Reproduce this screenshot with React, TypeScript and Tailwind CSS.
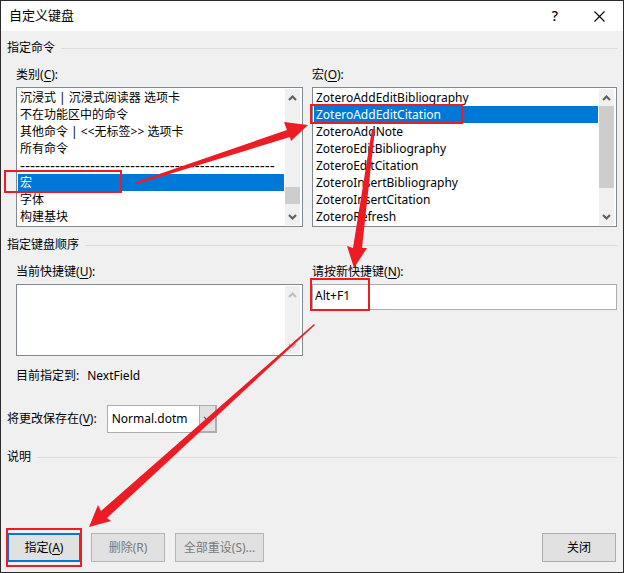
import type { ReactNode } from "react";

const ui = "font-['Noto_Sans','Noto_Sans_CJK_SC',sans-serif]";

function Chevron({ up, faint, thin }: { up?: boolean; faint?: boolean; thin?: boolean }) {
  return (
    <svg viewBox="0 0 9 8" className={`h-2 w-[9px] ${faint ? "text-[#bfbfbf]" : "text-[#606060]"}`} aria-hidden="true">
      <path d={up ? "M1 6 4.5 2.5 8 6" : "M1 2 4.5 5.5 8 2"} fill="none" stroke="currentColor" strokeWidth={thin ? 1.2 : 2.2} />
    </svg>
  );
}

function ScrollBar({ thumb, faint }: { thumb?: string; faint?: boolean }) {
  return (
    <div className="flex w-[15px] shrink-0 flex-col bg-[#f0f0f0]">
      <button type="button" aria-label="向上滚动" disabled={faint} className="flex h-[17px] shrink-0 items-center justify-center">
        <Chevron up faint={faint} />
      </button>
      <div className="flex-1">{thumb && <div className={`bg-[#cdcdcd] ${thumb}`} />}</div>
      <button type="button" aria-label="向下滚动" disabled={faint} className="flex h-[17px] shrink-0 items-center justify-center">
        <Chevron faint={faint} />
      </button>
    </div>
  );
}

function ListBox({ id, items, selected, thumb }: { id: string; items: string[]; selected: string; thumb: string }) {
  return (
    <div className="flex border border-[#828790] bg-white p-px pr-0.5">
      <ul role="listbox" aria-labelledby={id} className="min-w-0 flex-1 overflow-hidden pr-px">
        {items.map((item) => (
          <li
            key={item}
            role="option"
            aria-selected={item === selected}
            className={`h-[17px] overflow-hidden pl-0.5 leading-[17px] whitespace-pre ${
              item === selected ? "bg-[#0078d7] text-white" : ""
            } ${item.startsWith("---") ? "font-['Liberation_Sans',sans-serif] text-[15px]" : "text-xs"}`}
          >
            {item}
          </li>
        ))}
      </ul>
      <ScrollBar thumb={thumb} />
    </div>
  );
}

function Heading({ children }: { children: ReactNode }) {
  return (
    <div className="flex items-center gap-1.5">
      <h2 className="leading-4">{children}</h2>
      <div className="h-px flex-1 bg-[#dcdcdc]" />
    </div>
  );
}

function Key({ text, letter, colon }: { text: string; letter: string; colon?: boolean }) {
  return (
    <>
      {text}(<span className="underline underline-offset-2">{letter}</span>){colon && ":"}
    </>
  );
}

const categories = [
  "沉浸式 | 沉浸式阅读器 选项卡",
  "不在功能区中的命令",
  "其他命令 | <<无标签>> 选项卡",
  "所有命令",
  "---------------------------------------------------",
  "宏",
  "字体",
  "构建基块",
];

const macros = [
  "ZoteroAddEditBibliography",
  "ZoteroAddEditCitation",
  "ZoteroAddNote",
  "ZoteroEditBibliography",
  "ZoteroEditCitation",
  "ZoteroInsertBibliography",
  "ZoteroInsertCitation",
  "ZoteroRefresh",
];

function Annotations() {
  return (
    <svg className="pointer-events-none absolute -top-px -left-px h-[573px] w-[624px]" viewBox="0 0 624 573" aria-hidden="true">
      <g fill="none" stroke="#ed1c24" strokeWidth="2">
        <rect x="5" y="171" width="116" height="21" />
        <rect x="311" y="105" width="151" height="18" />
        <rect x="311" y="279" width="58" height="31" />
        <rect x="7" y="529" width="74" height="37" />
      </g>
      <g fill="#ed1c24">
        <path d="M136 182 L287 130 L284 122 L308 125 L291 141 L290 137 L137 184 Z" />
        <path d="M372 129 L375 129 L362 248 L367 248 L354 268 L347 246 L353 248 Z" />
        <path d="M314 324 L315 325 L107 518 L111 521 L89 527 L98 505 L101 511 Z" />
      </g>
    </svg>
  );
}

export default function App() {
  return (
    <div className={`relative flex min-h-screen flex-col border border-[#2b2b2b] bg-[#f0f0f0] text-xs text-black ${ui}`}>
      <header className="flex h-[30px] items-center bg-white pr-4 pl-2">
        <h1 className="flex-1 text-[13px]">自定义键盘</h1>
        <button type="button" aria-label="帮助" className="mr-7 w-4 text-sm font-medium">?</button>
        <button type="button" aria-label="关闭窗口" className="flex h-4 w-4 items-center justify-center">
          <svg viewBox="0 0 11 11" className="h-[11px] w-[11px]" aria-hidden="true">
            <path d="M.5 .5 10.5 10.5M10.5 .5 .5 10.5" stroke="#000" strokeWidth="1.1" />
          </svg>
        </button>
      </header>

      <main className="flex flex-1 flex-col px-1.5 pt-[9px] pb-2.5">
        <Heading>指定命令</Heading>
        <div className="mt-[11px] grid grid-cols-[287fr_305fr] gap-[9px] pl-[9px]">
          <section>
            <h3 id="category" className="mb-1 leading-4"><Key text="类别" letter="C" colon /></h3>
            <ListBox id="category" items={categories} selected="宏" thumb="mt-[81px] h-[17px]" />
          </section>
          <section>
            <h3 id="macro" className="mb-1 leading-4"><Key text="宏" letter="O" colon /></h3>
            <ListBox id="macro" items={macros} selected="ZoteroAddEditCitation" thumb="h-[82px]" />
          </section>
        </div>

        <div className="mt-2.5"><Heading>指定键盘顺序</Heading></div>
        <div className="mt-[11px] grid grid-cols-[287fr_305fr] gap-[9px] pl-[9px]">
          <section>
            <h3 id="current" className="mb-1 leading-4"><Key text="当前快捷键" letter="U" colon /></h3>
            <div className="flex h-[72px] border border-[#828790] bg-white p-px pr-0.5">
              <ul role="listbox" aria-labelledby="current" className="flex-1" />
              <ScrollBar faint />
            </div>
          </section>
          <section>
            <label htmlFor="shortcut" className="mb-1 block leading-4"><Key text="请按新快捷键" letter="N" colon /></label>
            <input id="shortcut" defaultValue="Alt+F1" className="block h-[26px] w-full border border-[#abadb3] bg-white px-0.5 pb-1 outline-none" />
          </section>
        </div>

        <p className="mt-3 flex gap-2 pl-[9px] leading-4">
          <span>目前指定到:</span>
          <span>NextField</span>
        </p>

        <div className="mt-[21px] flex items-center gap-2.5">
          <label htmlFor="save"><Key text="将更改保存在" letter="V" colon /></label>
          <div className="grid h-7 w-[110px] grid-cols-[1fr_18px]">
            <select id="save" className="col-span-2 col-start-1 row-start-1 appearance-none border border-[#adadad] bg-white px-1 outline-none">
              <option>Normal.dotm</option>
            </select>
            <span className="pointer-events-none col-start-2 row-start-1 flex items-center justify-center border border-r-2 border-b-2 border-[#adadad] bg-[#e1e1e1]">
              <Chevron thin />
            </span>
          </div>
        </div>

        <div className="mt-4"><Heading>说明</Heading></div>

        <footer className="mt-auto flex gap-2.5 pr-px">
          <button type="button" className="h-[29px] w-[74px] border-2 border-[#0078d7] bg-[#e1e1e1]"><Key text="指定" letter="A" /></button>
          <button type="button" disabled className="h-[29px] w-[74px] border border-[#b5b5b5] bg-[#e1e1e1] text-[#7a7a7a]">删除(R)</button>
          <button type="button" disabled className="h-[29px] w-[89px] border border-[#b5b5b5] bg-[#e1e1e1] text-[#7a7a7a]">全部重设(S)...</button>
          <button type="button" className="ml-auto h-[29px] w-[74px] border border-[#adadad] bg-[#e1e1e1]">关闭</button>
        </footer>
      </main>
      <Annotations />
    </div>
  );
}
